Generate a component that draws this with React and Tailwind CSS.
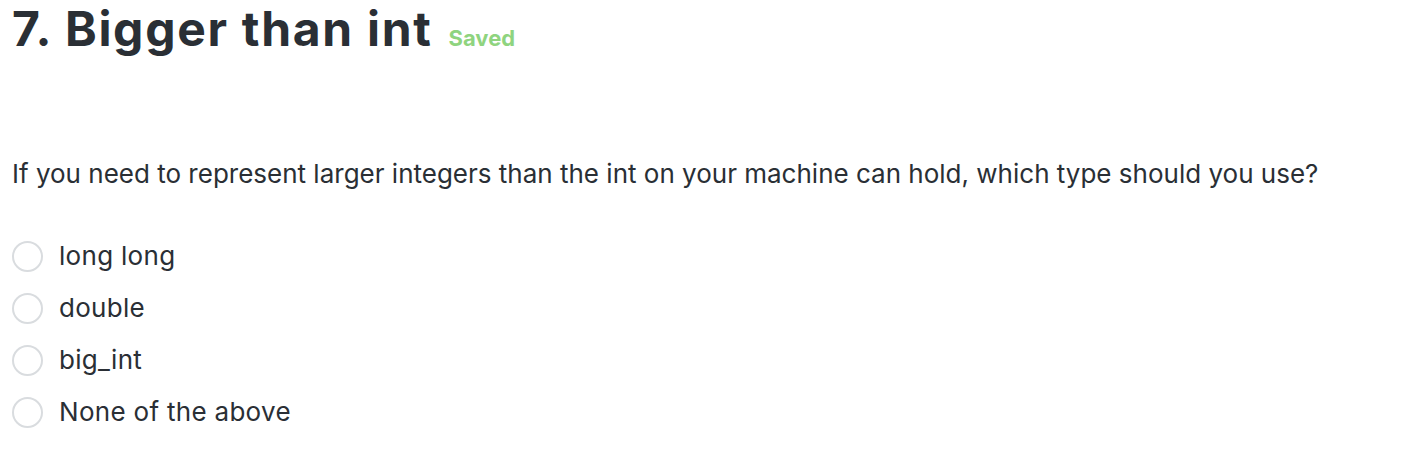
export default function App() {
  const options = ['long long', 'double', 'big_int', 'None of the above'];

  return (
    <div className="bg-white min-h-[472px] px-3 pt-[1px] text-[#2a2f35]" style={{ fontFamily: 'Inter, "Noto Sans", sans-serif' }}>
      {/* Title */}
      <div className="flex items-baseline gap-4">
        <h1 className="text-[48px] font-bold leading-[56px] tracking-[1.7px]">7. Bigger than int</h1>
        <span className="text-[22px] font-bold text-[#8fd47f]">Saved</span>
      </div>

      {/* Question */}
      <p className="mt-[99px] text-[26px] leading-[36px]">
        If you need to represent larger integers than the int on your machine can hold, which type should you use?
      </p>

      {/* Options */}
      <div className="mt-[38px] flex flex-col">
        {options.map((opt) => (
          <label key={opt} className="flex items-center h-[52px] gap-4 cursor-pointer">
            <span className="w-[31px] h-[31px] rounded-full border-2 border-[#d9dcdf] bg-white shrink-0" />
            <span className="text-[26px] leading-[36px] tracking-[0.3px]">{opt}</span>
          </label>
        ))}
      </div>
    </div>
  );
}
